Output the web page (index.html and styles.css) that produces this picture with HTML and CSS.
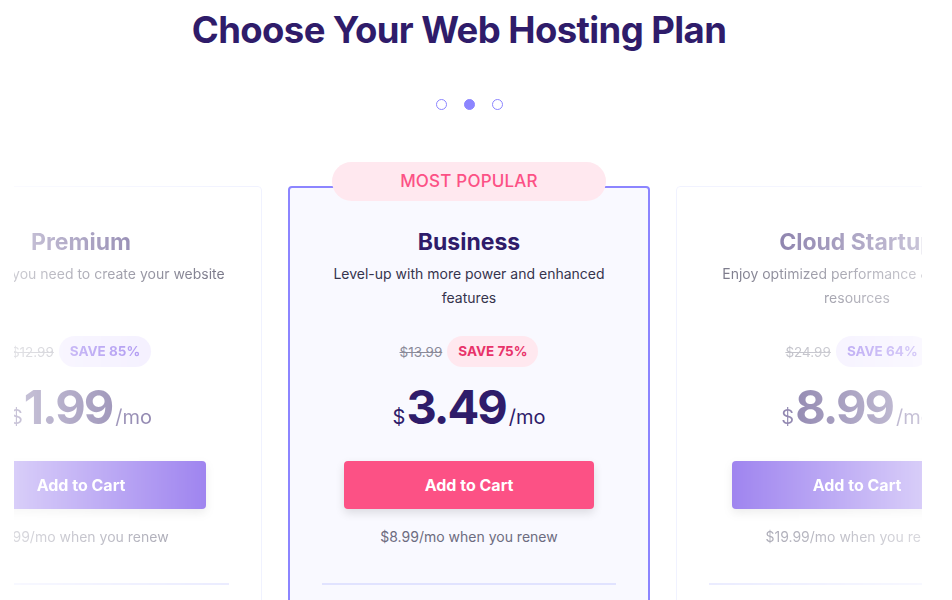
FILE: index.html
```html
<!DOCTYPE html>
<html lang="en">
<head>
<meta charset="utf-8">
<title>Choose Your Web Hosting Plan</title>
<link rel="stylesheet" href="styles.css">
</head>
<body>
<main class="page">
  <h1 class="title">Choose Your Web Hosting Plan</h1>
  <div class="dots">
    <span class="dot"></span>
    <span class="dot active"></span>
    <span class="dot"></span>
  </div>
  <div class="viewport">
    <div class="track">
      <article class="card side side-left">
        <h2 class="plan">Premium</h2>
        <p class="desc">Everything you need to create your website</p>
        <div class="deal"><span class="old">$12.99</span><span class="save">SAVE 85%</span></div>
        <div class="price"><span class="cur">$</span><span class="amount">1.99</span><span class="per">/mo</span></div>
        <button class="cart">Add to Cart</button>
        <p class="renew">$7.99/mo when you renew</p>
        <hr class="divider">
      </article>
      <article class="card featured">
        <div class="badge">MOST POPULAR</div>
        <h2 class="plan">Business</h2>
        <p class="desc">Level-up with more power and enhanced features</p>
        <div class="deal"><span class="old">$13.99</span><span class="save">SAVE 75%</span></div>
        <div class="price"><span class="cur">$</span><span class="amount">3.49</span><span class="per">/mo</span></div>
        <button class="cart">Add to Cart</button>
        <p class="renew">$8.99/mo when you renew</p>
        <hr class="divider">
      </article>
      <article class="card side side-right">
        <h2 class="plan">Cloud Startup</h2>
        <p class="desc">Enjoy optimized performance &amp; powerful resources</p>
        <div class="deal"><span class="old">$24.99</span><span class="save">SAVE 64%</span></div>
        <div class="price"><span class="cur">$</span><span class="amount">8.99</span><span class="per">/mo</span></div>
        <button class="cart">Add to Cart</button>
        <p class="renew">$19.99/mo when you renew</p>
        <hr class="divider">
      </article>
    </div>
  </div>
</main>
</body>
</html>
```

FILE: styles.css
```css
* { box-sizing: border-box; }

html, body {
  margin: 0;
  padding: 0;
  background: #ffffff;
  overflow: hidden;
}

body {
  font-family: Inter, "DejaVu Sans", sans-serif;
  color: #2f1c6a;
}

.page {
  width: 952px;
  height: 600px;
}

.title {
  margin: 0;
  padding-top: 6px;
  padding-right: 34px;
  font-size: 36.5px;
  line-height: 48px;
  font-weight: 700;
  letter-spacing: -0.6px;
  text-align: center;
  color: #2f1c6a;
}

.dots {
  display: flex;
  justify-content: center;
  gap: 17px;
  margin-top: 45px;
  padding-right: 14px;
  height: 12px;
}

.dot {
  width: 11px;
  height: 11px;
  border-radius: 50%;
  border: 1.5px solid #8c85ff;
  background: #ffffff;
}

.dot.active {
  background: #8c85ff;
}

.viewport {
  margin-top: 51px;
  margin-left: 14px;
  width: 908px;
  height: 438px;
  overflow: hidden;
}

.track {
  display: flex;
  justify-content: center;
  gap: 26px;
  padding-top: 24px;
  padding-left: 2px;
}

.card {
  position: relative;
  flex: 0 0 362px;
  min-height: 460px;
  border: 1px solid #ebedff;
  border-radius: 4px;
  background: #ffffff;
  padding: 41px 32px 0;
  display: flex;
  flex-direction: column;
  align-items: center;
  text-align: center;
}

.featured {
  border: 2px solid #8c85ff;
  background: #f9f9ff;
  padding-top: 40px;
}

.side-left {
  -webkit-mask-image: linear-gradient(to right, rgba(0,0,0,0.03) 0%, rgba(0,0,0,0.74) 100%);
  mask-image: linear-gradient(to right, rgba(0,0,0,0.03) 0%, rgba(0,0,0,0.74) 100%);
}

.side-right {
  -webkit-mask-image: linear-gradient(to left, rgba(0,0,0,0.03) 0%, rgba(0,0,0,0.74) 100%);
  mask-image: linear-gradient(to left, rgba(0,0,0,0.03) 0%, rgba(0,0,0,0.74) 100%);
}

.badge {
  position: absolute;
  top: -26px;
  left: 50%;
  transform: translateX(-50%);
  width: 274px;
  height: 39px;
  border-radius: 20px;
  background: #ffe8ef;
  color: #fc5185;
  font-size: 17px;
  font-weight: 500;
  line-height: 39px;
  letter-spacing: 0.2px;
}

.plan {
  margin: 0;
  font-size: 23px;
  line-height: 28px;
  font-weight: 700;
  color: #2f1c6a;
}

.desc {
  margin: 6px 0 0;
  max-width: 290px;
  min-height: 48px;
  font-size: 14px;
  line-height: 24px;
  color: #36344d;
}

.deal {
  display: flex;
  align-items: center;
  gap: 5px;
  margin-top: 26px;
  height: 31px;
}

.old {
  font-size: 13.5px;
  color: #8a8a99;
  text-decoration: line-through;
}

.save {
  height: 31px;
  line-height: 31px;
  padding: 0 11px;
  border-radius: 16px;
  font-size: 13.5px;
  font-weight: 700;
  background: #ebe4ff;
  color: #673de6;
}

.featured .save {
  background: #ffe8ef;
  color: #e8336a;
}

.price {
  display: flex;
  align-items: baseline;
  margin-top: 12px;
  height: 56px;
  line-height: 56px;
  color: #2f1c6a;
}

.cur {
  font-size: 20px;
  margin-right: 1px;
}

.amount {
  font-size: 47px;
  font-weight: 700;
  letter-spacing: -2px;
}

.per {
  font-size: 20px;
  margin-left: 3px;
}

.cart {
  margin-top: 26px;
  width: 250px;
  height: 48px;
  border: 0;
  border-radius: 4px;
  background: #673de6;
  color: #ffffff;
  font-family: inherit;
  font-size: 16px;
  font-weight: 700;
  box-shadow: 0 4px 10px rgba(0, 0, 0, 0.12);
}

.featured .cart {
  background: #fc5185;
}

.renew {
  margin: 18px 0 0;
  font-size: 14px;
  line-height: 20px;
  color: #6d6c80;
}

.divider {
  align-self: stretch;
  margin: 36px 0 0;
  border: 0;
  height: 2px;
  background: #e1e3ff;
}
```
